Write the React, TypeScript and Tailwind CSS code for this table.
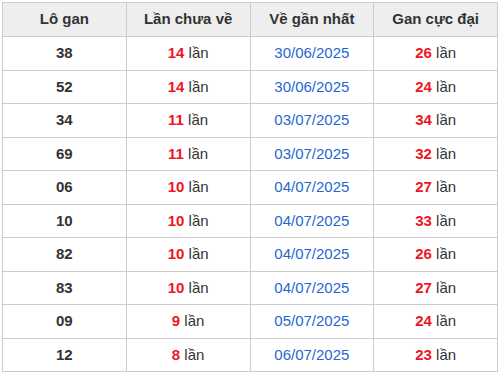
import React from "react";

const rows = [
  ["38", "14", "30/06/2025", "26"],
  ["52", "14", "30/06/2025", "24"],
  ["34", "11", "03/07/2025", "34"],
  ["69", "11", "03/07/2025", "32"],
  ["06", "10", "04/07/2025", "27"],
  ["10", "10", "04/07/2025", "33"],
  ["82", "10", "04/07/2025", "26"],
  ["83", "10", "04/07/2025", "27"],
  ["09", "9", "05/07/2025", "24"],
  ["12", "8", "06/07/2025", "23"],
];

export default function App() {
  return (
    <div className="p-[2px] bg-white" style={{ fontFamily: '"Liberation Sans", Arial, sans-serif' }}>
      <table className="w-[496px] table-fixed border-collapse text-[15px] text-[#333]">
        <thead>
          <tr className="bg-[#eeeeee] h-[34px]">
            {["Lô gan", "Lần chưa về", "Về gần nhất", "Gan cực đại"].map((h) => (
              <th key={h} className="border border-[#cccccc] font-bold text-center p-0">
                {h}
              </th>
            ))}
          </tr>
        </thead>
        <tbody>
          {rows.map((r, i) => (
            <tr key={i} className="h-[33.5px]">
              <td className="border border-[#cccccc] text-center font-bold p-0">{r[0]}</td>
              <td className="border border-[#cccccc] text-center p-0">
                <span className="font-bold text-[#f0141e]">{r[1]}</span> lần
              </td>
              <td className="border border-[#cccccc] text-center p-0 text-[#1f67d2]">{r[2]}</td>
              <td className="border border-[#cccccc] text-center p-0">
                <span className="font-bold text-[#f0141e]">{r[3]}</span> lần
              </td>
            </tr>
          ))}
        </tbody>
      </table>
    </div>
  );
}
